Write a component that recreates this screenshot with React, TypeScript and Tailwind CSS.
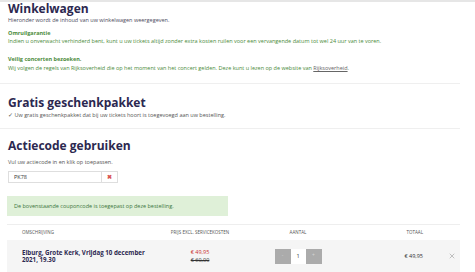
import React from 'react';
import { X } from 'lucide-react';

const font = { fontFamily: '"Open Sans", "Liberation Sans", sans-serif' };

const App: React.FC = () => {
  return (
    <div className="w-[475px] h-[272px] overflow-hidden bg-white" style={font}>
      <div className="h-[2px] bg-[#e6e6e6]" />

      <div className="w-[460px]">
        {/* Winkelwagen */}
        <div className="pl-[8px]">
          <h1 className="text-[12px] leading-[13px] font-bold text-[#2c2850]">Winkelwagen</h1>
          <p className="mt-[1px] text-[5.5px] leading-[8px] text-[#4d4b5e]">
            Hieronder wordt de inhoud van uw winkelwagen weergegeven.
          </p>
          <p className="mt-[5px] text-[5.5px] leading-[8px] font-bold text-[#4b8b3b]">Omruilgarantie</p>
          <p className="text-[5.5px] leading-[8px] text-[#4b8b3b]">
            Indien u onverwacht verhinderd bent, kunt u uw tickets altijd zonder extra kosten ruilen voor een vervangende datum tot wel 24 uur van te voren.
          </p>
          <p className="mt-[10px] text-[5.5px] leading-[8px] font-bold text-[#4b8b3b]">Veilig concerten bezoeken.</p>
          <p className="mt-[1px] text-[5.5px] leading-[8px] text-[#4b8b3b]">
            Wij volgen de regels van Rijksoverheid die op het moment van het concert gelden. Deze kunt u lezen op de website van{' '}
            <span className="text-[#666] underline">Rijksoverheid</span>.
          </p>
        </div>

        <div className="mt-[11px] h-px bg-[#efefef]" />

        {/* Gratis geschenkpakket */}
        <div className="pl-[8px]">
          <h2 className="mt-[12px] text-[12px] leading-[14px] font-bold text-[#2c2850]">Gratis geschenkpakket</h2>
          <p className="mt-[1px] text-[5.5px] leading-[8px] text-[#555]">
            ✓ Uw gratis geschenkpakket dat bij uw tickets hoort is toegevoegd aan uw bestelling.
          </p>
        </div>

        <div className="mt-[9px] h-px bg-[#efefef]" />

        {/* Actiecode */}
        <div className="pl-[8px]">
          <h2 className="mt-[10px] text-[12px] leading-[14px] font-bold text-[#2c2850]">Actiecode gebruiken</h2>
          <p className="mt-[5px] text-[5.5px] leading-[8px] text-[#555]">Vul uw actiecode in en klik op toepassen.</p>
          <div className="mt-[5px] flex w-[110px] h-[12px] border border-[#dedede]">
            <div className="flex-1 flex items-center pl-[5px] text-[5.5px] text-[#333]">PK78</div>
            <div className="w-[16px] border-l border-[#dedede] flex items-center justify-center text-[6px] leading-none font-bold text-[#d9534f]">
              ✖
            </div>
          </div>
          <div className="mt-[13px] w-[221px] h-[20px] -ml-px bg-[#dff0d8] flex items-center pl-[7px] text-[5.5px] text-[#3c763d]">
            De bovenstaande couponcode is toegepast op deze bestelling.
          </div>
        </div>

        {/* Table */}
        <div className="mt-[8px] ml-[7px] border-t border-[#eeeeee]">
          <div className="grid grid-cols-[156px_74px_122px_84px_17px] h-[15px] items-center text-[4.5px] uppercase text-[#555]">
            <div className="pl-[15px]">Omschrijving</div>
            <div className="text-center">Prijs excl. servicekosten</div>
            <div className="text-center">Aantal</div>
            <div className="text-right pr-[20px]">Totaal</div>
            <div />
          </div>
          <div className="grid grid-cols-[156px_74px_122px_84px_17px] h-[32px] items-center bg-[#f5f5f5]">
            <div className="pl-[15px] pr-[14px] text-[6.2px] leading-[7px] font-bold text-[#2c2850]">
              Elburg, Grote Kerk, Vrijdag 10 december 2021, 19.30
            </div>
            <div className="text-center text-[5.5px] leading-[8px]">
              <div className="text-[#c9302c]">€ 49,95</div>
              <div className="text-[#333] line-through">€ 60,00</div>
            </div>
            <div className="flex justify-center">
              <div className="w-[16px] h-[15px] bg-[#ababab] flex items-center justify-center text-[5px] text-[#d4d4d4]">-</div>
              <div className="w-[15px] h-[15px] bg-white flex items-center justify-center text-[5.5px] text-[#333]">1</div>
              <div className="w-[16px] h-[15px] bg-[#ababab] flex items-center justify-center text-[5px] text-[#d4d4d4]">+</div>
            </div>
            <div className="text-right pr-[20px] text-[5.5px] text-[#333]">€ 49,95</div>
            <div className="flex justify-center">
              <X size={8} strokeWidth={1.5} className="text-[#888]" />
            </div>
          </div>
        </div>
      </div>
    </div>
  );
};

export default App;
